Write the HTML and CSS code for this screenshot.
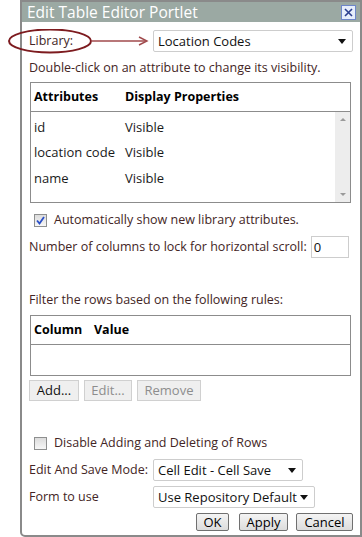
FILE: index.html
```html
<!DOCTYPE html>
<html lang="en">
<head>
    <meta charset="UTF-8">
    <title>Edit Table Editor Portlet</title>
    <link rel="stylesheet" href="styles.css">
</head>
<body>

<div class="dialog">
    <!-- title bar -->
    <div class="titlebar">
        <span class="title">Edit Table Editor Portlet</span>
        <span class="close-btn">
            <svg width="11" height="11" viewBox="0 0 11 11"><path d="M2 2 L9 9 M9 2 L2 9" stroke="#2b3f8f" stroke-width="1.6"/></svg>
        </span>
    </div>

    <div class="content">
        <div class="row lib-row">
            <span class="label">Library:</span>
            <div class="dropdown wide">
                <span>Location Codes</span>
                <span class="caret"></span>
            </div>
        </div>

        <p class="text hint">Double-click on an attribute to change its visibility.</p>

        <!-- attributes -->
        <div class="grid attr-grid">
            <div class="grid-head">
                <span class="col1">Attributes</span>
                <span>Display Properties</span>
            </div>
            <div class="grid-body">
                <div class="grid-rows">
                    <div class="grid-row"><span class="col1">id</span><span>Visible</span></div>
                    <div class="grid-row"><span class="col1">location code</span><span>Visible</span></div>
                    <div class="grid-row"><span class="col1">name</span><span>Visible</span></div>
                </div>
                <div class="scrollbar">
                    <span class="sb-up"></span>
                    <span class="sb-down"></span>
                </div>
            </div>
        </div>

        <label class="check-row auto-row">
            <span class="checkbox checked">
                <svg width="9" height="9" viewBox="0 0 9 9"><path d="M1 4.5 L3.5 7.5 L8 1" fill="none" stroke="#2a4fc8" stroke-width="1.8"/></svg>
            </span>
            <span class="text">Automatically show new library attributes.</span>
        </label>

        <div class="row lock-row">
            <span class="text">Number of columns to lock for horizontal scroll:</span>
            <span class="num-input">0</span>
        </div>

        <p class="text filter-text">Filter the rows based on the following rules:</p>

        <!-- filter rules -->
        <div class="grid rule-grid">
            <div class="grid-head">
                <span class="col-rule">Column</span>
                <span>Value</span>
            </div>
        </div>

        <div class="rule-btns">
            <span class="flat-btn add">Add...</span>
            <span class="flat-btn edit disabled">Edit...</span>
            <span class="flat-btn remove disabled">Remove</span>
        </div>

        <label class="check-row disable-row">
            <span class="checkbox"></span>
            <span class="text">Disable Adding and Deleting of Rows</span>
        </label>

        <div class="row mode-row">
            <span class="label">Edit And Save Mode:</span>
            <div class="dropdown mode">
                <span>Cell Edit - Cell Save</span>
                <span class="caret"></span>
            </div>
        </div>

        <div class="row form-row">
            <span class="label">Form to use</span>
            <div class="dropdown form">
                <span>Use Repository Default</span>
                <span class="caret"></span>
            </div>
        </div>

        <div class="footer">
            <span class="btn ok">OK</span>
            <span class="btn apply">Apply</span>
            <span class="btn cancel">Cancel</span>
        </div>
    </div>
</div>

<!-- annotation: circle around Library + arrow -->
<svg class="annotation" width="160" height="30" viewBox="0 0 160 30">
    <ellipse cx="50" cy="12" rx="41" ry="11.5" fill="none" stroke="#7d1b1f" stroke-width="2"/>
    <path d="M91 12 L146 12" stroke="#a04a4c" stroke-width="1.4"/>
    <path d="M139 8 L147 12 L139 16" fill="none" stroke="#a04a4c" stroke-width="1.4"/>
</svg>

</body>
</html>
```

FILE: styles.css
```css
body {
    margin: 0;
    background: #fff;
    font-family: "Open Sans", Arial, sans-serif;
    font-size: 12.5px;
    line-height: 16px;
    color: #432525;
}
.dialog {
    margin-left: 20px;
    width: 338px;
    height: 533px;
    border: 2px solid #8a8a8a;
    border-bottom-left-radius: 5px;
}
.titlebar {
    height: 20px;
    background: #9ba9a3;
    display: flex;
    align-items: center;
    justify-content: space-between;
    padding: 0 4px 0 5px;
}
.title {
    color: #fff;
    font-size: 15.5px;
}
.close-btn {
    width: 13px;
    height: 13px;
    border: 1px solid #6d86c9;
    background: #e6eefb;
    display: flex;
    align-items: center;
    justify-content: center;
}
.content {
    padding: 0 7px;
}
.row {
    display: flex;
    align-items: center;
}
.label {
    width: 124px;
}
.text {
    margin: 0;
}
.lib-row {
    margin-top: 8px;
}
.dropdown {
    height: 20px;
    border: 1px solid #cdcdcd;
    border-radius: 2px;
    display: flex;
    align-items: center;
    justify-content: space-between;
    padding: 0 6px 0 4px;
    color: #111;
    font-size: 13px;
}
.dropdown.wide { width: 188px; }
.dropdown.mode { width: 138px; }
.dropdown.form { width: 150px; }
.caret {
    width: 0;
    height: 0;
    border-left: 4px solid transparent;
    border-right: 4px solid transparent;
    border-top: 5px solid #111;
}
.hint {
    margin-top: 8px;
}
.grid {
    margin-left: 1px;
    width: 319px;
    border: 1px solid #8c8c8c;
    color: #1a1a1a;
}
.attr-grid {
    margin-top: 6px;
    height: 119px;
}
.grid-head {
    height: 28px;
    border-bottom: 1px solid #8c8c8c;
    display: flex;
    align-items: center;
    padding-left: 3px;
    font-weight: bold;
    font-size: 12.5px;
    color: #000;
}
.col1 { width: 91px; }
.col-rule { width: 60px; }
.grid-body {
    display: flex;
    height: 90px;
}
.grid-rows {
    flex: 1;
    padding-top: 2px;
}
.grid-row {
    display: flex;
    align-items: center;
    height: 25.5px;
    padding-left: 3px;
    font-size: 13px;
}
.scrollbar {
    width: 15px;
    background: #ededed;
    display: flex;
    flex-direction: column;
    justify-content: space-between;
    align-items: center;
    padding: 6px 0;
}
.sb-up, .sb-down {
    width: 0;
    height: 0;
    border-left: 3px solid transparent;
    border-right: 3px solid transparent;
}
.sb-up { border-bottom: 3px solid #9a9a9a; }
.sb-down { border-top: 3px solid #9a9a9a; }
.check-row {
    display: flex;
    align-items: center;
    height: 16px;
    padding-left: 5px;
}
.auto-row { margin-top: 9px; }
.checkbox {
    width: 11px;
    height: 11px;
    border: 1px solid #8e8f8f;
    background: linear-gradient(#dcdcdc, #f7f7f7);
    margin-right: 7px;
    display: flex;
    align-items: center;
    justify-content: center;
}
.lock-row { margin-top: 8px; }
.num-input {
    margin-left: 4px;
    width: 34px;
    height: 20px;
    border: 1px solid #cdcdcd;
    padding-left: 2px;
    color: #111;
    font-size: 13px;
    line-height: 20px;
}
.filter-text { margin-top: 34px; }
.rule-grid {
    margin-top: 7px;
    height: 59px;
}
.rule-btns {
    display: flex;
    gap: 5px;
    margin-top: 4px;
    height: 21px;
}
.flat-btn {
    height: 19px;
    line-height: 19px;
    border: 1px solid #d0d0d0;
    background: #efefef;
    color: #111;
    font-size: 13px;
    text-align: center;
}
.flat-btn.add { width: 48px; }
.flat-btn.edit { width: 46px; }
.flat-btn.remove { width: 62px; }
.flat-btn.disabled { color: #8d8d8d; }
.disable-row { margin-top: 34px; }
.mode-row { margin-top: 8px; }
.form-row { margin-top: 5px; }
.footer {
    display: flex;
    justify-content: flex-end;
    margin-top: 5px;
    height: 18px;
}
.btn {
    height: 16px;
    line-height: 16px;
    border: 1px solid #707070;
    border-radius: 2px;
    background: linear-gradient(#f4f4f4, #dcdcdc);
    color: #000;
    text-align: center;
    font-size: 13px;
}
.btn.ok { width: 31px; }
.btn.apply { width: 47px; margin-left: 10px; }
.btn.cancel { width: 55px; margin-left: 8px; }
.annotation {
    position: absolute;
    left: 0;
    top: 29px;
}
```
